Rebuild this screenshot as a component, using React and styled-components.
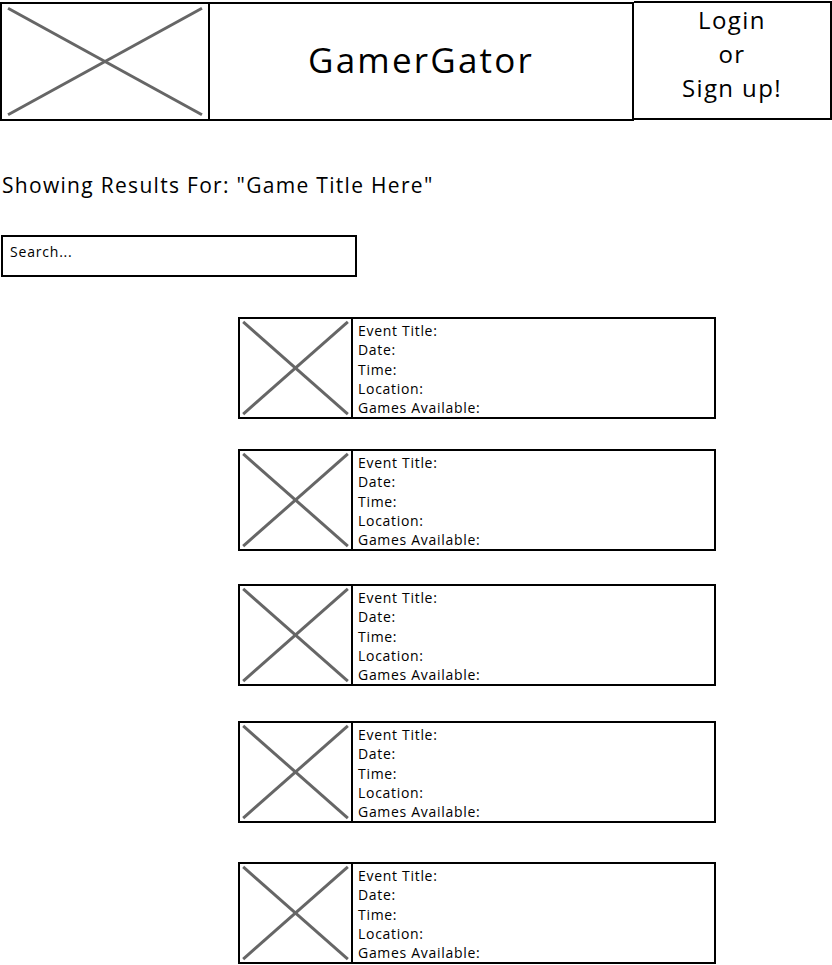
import styled, { createGlobalStyle } from 'styled-components';

const GlobalStyle = createGlobalStyle`
    body {
        margin: 0;
        background: #fff;
        font-family: "Open Sans", "Liberation Sans", sans-serif;
        color: #000;
    }
`;

const events = [
    { id: 1, space: 40 },
    { id: 2, space: 30 },
    { id: 3, space: 33 },
    { id: 4, space: 35 },
    { id: 5, space: 39 },
];

const fields = ['Event Title:', 'Date:', 'Time:', 'Location:', 'Games Available:'];

const Placeholder = () => (
    <svg width="100%" height="100%" viewBox="0 0 100 100" preserveAspectRatio="none">
        <line x1="2" y1="2" x2="98" y2="98" stroke="#666" strokeWidth="3" vectorEffect="non-scaling-stroke" />
        <line x1="98" y1="2" x2="2" y2="98" stroke="#666" strokeWidth="3" vectorEffect="non-scaling-stroke" />
    </svg>
);

const App = () => {
    return (
        <Page>
            <GlobalStyle />
            <Header>
                <Logo>
                    <Placeholder />
                </Logo>
                <Title>GamerGator</Title>
                <LoginBox>
                    <span>Login</span>
                    <span>or</span>
                    <span>Sign up!</span>
                </LoginBox>
            </Header>

            <Results>Showing Results For: "Game Title Here"</Results>

            <SearchBox>Search...</SearchBox>

            <EventList>
                {events.map((ev) => (
                    <EventCard key={ev.id} space={ev.space}>
                        <Thumb>
                            <Placeholder />
                        </Thumb>
                        <Details>
                            {fields.map((f) => (
                                <div key={f}>{f}</div>
                            ))}
                        </Details>
                    </EventCard>
                ))}
            </EventList>
        </Page>
    );
};

export default App;

const Page = styled.div`
    width: 832px;
    padding-top: 1px;
`;

const Header = styled.header`
    display: flex;
    height: 120px;
`;

const Logo = styled.div`
    width: 208px;
    margin-top: 1px;
    border: solid 2px #000;
    border-right: none;
    box-sizing: border-box;
    padding: 2px;
`;

const Title = styled.div`
    width: 426px;
    margin-top: 1px;
    border: solid 2px #000;
    box-sizing: border-box;
    display: flex;
    align-items: center;
    justify-content: center;
    font-size: 35px;
    letter-spacing: 2.2px;
    padding-bottom: 4px;
`;

const LoginBox = styled.div`
    flex: 1;
    border: solid 2px #000;
    border-left: none;
    box-sizing: border-box;
    height: 119px;
    display: flex;
    flex-direction: column;
    align-items: center;
    justify-content: flex-start;
    font-size: 24px;
    letter-spacing: 1.4px;
    line-height: 34px;
`;

const Results = styled.div`
    margin-top: 50px;
    padding-left: 2px;
    font-size: 21px;
    letter-spacing: 1.3px;
    line-height: 28px;
`;

const SearchBox = styled.div`
    margin-top: 36px;
    margin-left: 1px;
    width: 356px;
    height: 42px;
    border: solid 2px #000;
    box-sizing: border-box;
    padding: 5px 7px;
    font-size: 14px;
    letter-spacing: 0.8px;
`;

const EventList = styled.div`
    display: flex;
    flex-direction: column;
    margin-left: 238px;
`;

const EventCard = styled.div`
    display: flex;
    width: 478px;
    height: 102px;
    margin-top: ${(p) => p.space}px;
    border: solid 2px #000;
    box-sizing: border-box;
`;

const Thumb = styled.div`
    width: 113px;
    border-right: solid 2px #000;
    box-sizing: border-box;
    padding: 1px;
`;

const Details = styled.div`
    padding: 2px 0 0 5px;
    font-size: 14px;
    letter-spacing: 0.7px;
    line-height: 19.3px;
`;
